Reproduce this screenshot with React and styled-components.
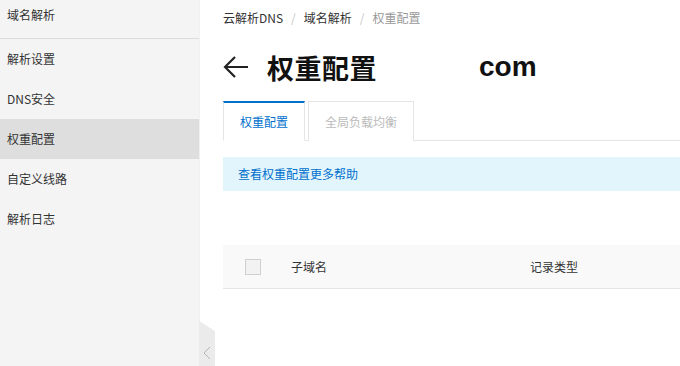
import React from 'react';
import styled, { createGlobalStyle } from 'styled-components';

const GlobalStyle = createGlobalStyle`
  html, body {
    margin: 0;
    padding: 0;
    background: #ffffff;
    font-family: "Microsoft YaHei", "Noto Sans CJK SC", "Liberation Sans", sans-serif;
    font-size: 12px;
    color: #333333;
  }
  * {
    box-sizing: border-box;
  }
`;

const Layout = styled.div`
  display: flex;
  width: 680px;
  height: 366px;
  overflow: hidden;
`;

const Sidebar = styled.aside`
  width: 200px;
  flex-shrink: 0;
  background: #f4f4f4;
  position: relative;
  border-right: 1px solid #f0f0f0;
`;

const SideTitle = styled.div`
  height: 39px;
  padding: 6px 7px 0;
  font-size: 12px;
  color: #333333;
  border-bottom: 1px solid #dcdcdc;
  line-height: 18px;
`;

const NavList = styled.ul`
  list-style: none;
  margin: 0;
  padding: 0;
`;

const NavItem = styled.li`
  height: 40px;
  line-height: 40px;
  padding-left: 7px;
  color: #333333;
  background: ${(p) => (p.$active ? '#dedede' : 'transparent')};
`;

const Collapse = styled.div`
  position: absolute;
  right: -16px;
  bottom: 0;
  width: 16px;
  height: 45px;
  background: #ebebeb;
  clip-path: polygon(0 0, 100% 22%, 100% 100%, 0 100%);
  display: flex;
  align-items: flex-end;
  justify-content: center;
  padding-bottom: 6px;
`;

const Main = styled.main`
  flex: 1;
  padding: 8px 0 0 23px;
  min-width: 0;
`;

const Breadcrumb = styled.div`
  display: flex;
  align-items: center;
  gap: 8px;
  height: 18px;
  color: #333333;
`;

const Crumb = styled.span`
  color: ${(p) => (p.$current ? '#999999' : '#333333')};
`;

const Sep = styled.span`
  color: #c8c8c8;
`;

const TitleRow = styled.div`
  display: flex;
  align-items: center;
  height: 46px;
  margin-top: 18px;
`;

const Back = styled.div`
  width: 26px;
  height: 26px;
  display: flex;
  align-items: center;
  margin-right: 18px;
`;

const Title = styled.h1`
  margin: 0;
  font-size: 27px;
  font-weight: 700;
  color: #111111;
  letter-spacing: 0.5px;
`;

const Domain = styled.span`
  margin-left: 102px;
  font-family: "Liberation Sans", "Noto Sans", sans-serif;
  font-size: 28px;
  font-weight: 700;
  color: #111111;
`;

const Tabs = styled.div`
  display: flex;
  margin-top: 11px;
  height: 40px;
  border-bottom: 1px solid #e5e5e5;
`;

const Tab = styled.div`
  height: 40px;
  display: flex;
  align-items: center;
  justify-content: center;
  padding: 0 16px;
  margin-right: 3px;
  border: 1px solid #e5e5e5;
  border-top: ${(p) => (p.$active ? '2px solid #0070cc' : '1px solid #e5e5e5')};
  border-bottom: ${(p) => (p.$active ? '1px solid #ffffff' : 'none')};
  margin-bottom: -1px;
  background: #ffffff;
  color: ${(p) => (p.$active ? '#0070cc' : '#bbbbbb')};
  width: ${(p) => p.$w}px;
`;

const Help = styled.div`
  margin-top: 16px;
  height: 34px;
  line-height: 34px;
  padding-left: 15px;
  background: #e2f5fd;
  color: #0070cc;
`;

const TableHead = styled.div`
  margin-top: 54px;
  height: 44px;
  display: flex;
  align-items: center;
  background: #f9f9f9;
  border-bottom: 1px solid #e5e5e5;
  color: #333333;
`;

const CheckCell = styled.div`
  width: 68px;
  padding-left: 22px;
  display: flex;
  align-items: center;
`;

const Checkbox = styled.span`
  width: 16px;
  height: 16px;
  border: 1px solid #d0d0d0;
  background: #f2f2f2;
`;

const HeadCell = styled.div`
  width: ${(p) => p.$w}px;
`;

const navItems = ['解析设置', 'DNS安全', '权重配置', '自定义线路', '解析日志'];

export default function App() {
  return (
    <>
      <GlobalStyle />
      <Layout>
        <Sidebar>
          <SideTitle>域名解析</SideTitle>
          <NavList>
            {navItems.map((item) => (
              <NavItem key={item} $active={item === '权重配置'}>
                {item}
              </NavItem>
            ))}
          </NavList>
          <Collapse>
            <svg width="8" height="14" viewBox="0 0 8 14">
              <path d="M7 1 L1 7 L7 13" fill="none" stroke="#b5b5b5" strokeWidth="1" />
            </svg>
          </Collapse>
        </Sidebar>
        <Main>
          <Breadcrumb>
            <Crumb>云解析DNS</Crumb>
            <Sep>/</Sep>
            <Crumb>域名解析</Crumb>
            <Sep>/</Sep>
            <Crumb $current>权重配置</Crumb>
          </Breadcrumb>
          <TitleRow>
            <Back>
              <svg width="26" height="24" viewBox="0 0 26 24">
                <path d="M25 12 H2 M12 2 L2 12 L12 22" fill="none" stroke="#222222" strokeWidth="2.2" />
              </svg>
            </Back>
            <Title>权重配置</Title>
            <Domain>com</Domain>
          </TitleRow>
          <Tabs>
            <Tab $active $w={82}>权重配置</Tab>
            <Tab $w={106}>全局负载均衡</Tab>
          </Tabs>
          <Help>查看权重配置更多帮助</Help>
          <TableHead>
            <CheckCell>
              <Checkbox />
            </CheckCell>
            <HeadCell $w={239}>子域名</HeadCell>
            <HeadCell $w={150}>记录类型</HeadCell>
          </TableHead>
        </Main>
      </Layout>
    </>
  );
}
